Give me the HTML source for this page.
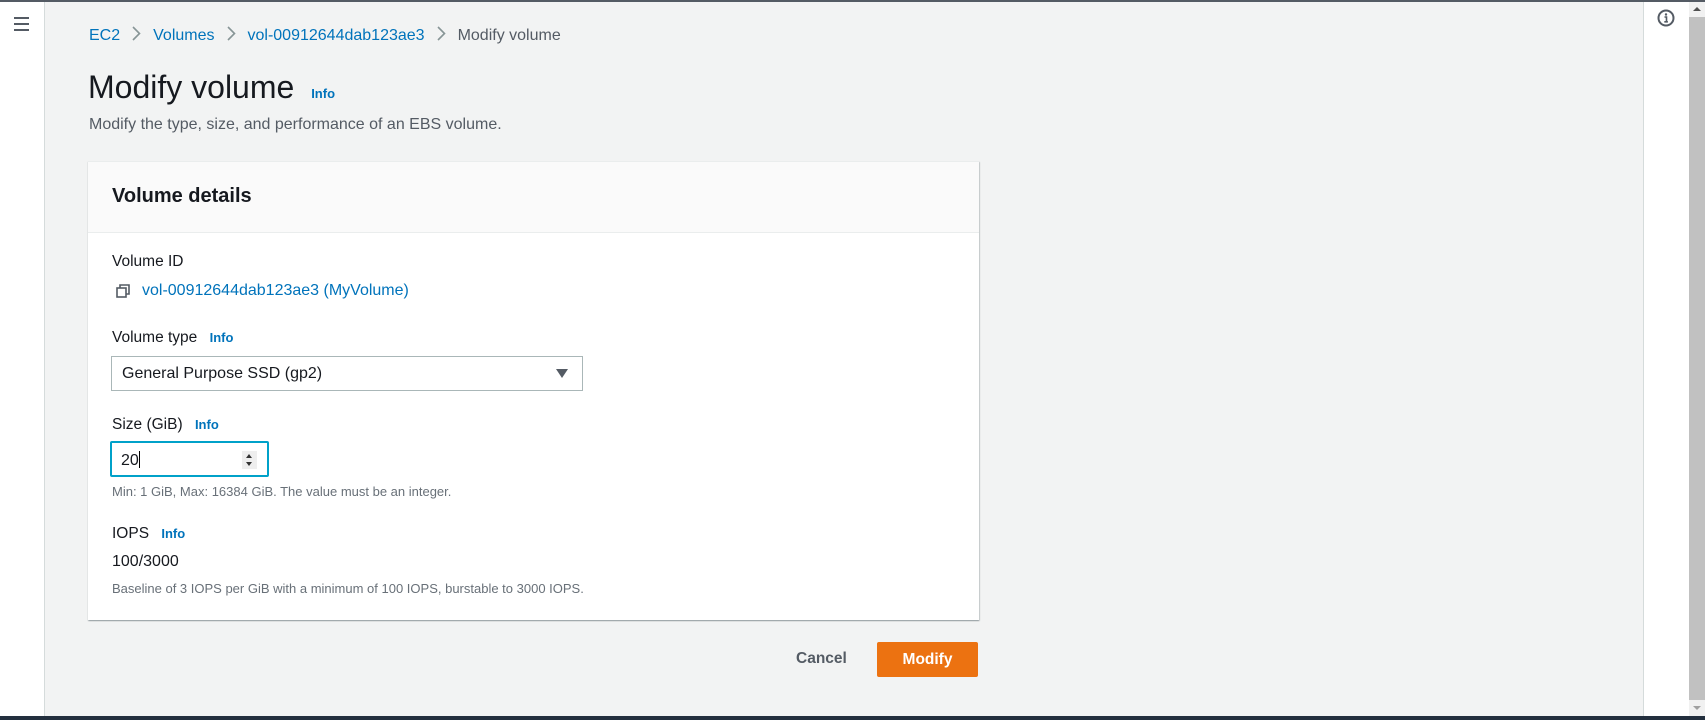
<!DOCTYPE html>
<html><head><meta charset="utf-8"><style>
*{margin:0;padding:0;box-sizing:border-box}
body{width:1705px;height:720px;overflow:hidden;background:#f2f3f3;font-family:"Liberation Sans",sans-serif;color:#16191f;position:relative}
.a{position:absolute;white-space:nowrap}
.lnk{color:#0073bb}
.info{color:#0073bb;font-weight:bold;font-size:13px}
.lbl{font-size:15.5px;color:#16191f}
.help{font-size:13px;color:#687078}
.chev{display:inline-block;margin:0 12px;vertical-align:-1px}
</style></head><body>
<div class="a" style="left:0;top:0;width:1705px;height:2px;background:#545b64"></div>
<div class="a" style="left:0;top:2px;width:45px;height:714px;background:#fff;border-right:1px solid #d5dbdb"></div>
<div class="a" style="left:14px;top:17px;width:15px">
 <div style="height:2px;background:#545b64;margin-bottom:4px"></div>
 <div style="height:2px;background:#545b64;margin-bottom:4px"></div>
 <div style="height:2px;background:#545b64"></div>
</div>
<div class="a" style="left:1643px;top:2px;width:46px;height:714px;background:#fff;border-left:1px solid #d5dbdb"></div>
<svg class="a" style="left:1657px;top:9px" width="18" height="18" viewBox="0 0 18 18"><circle cx="9" cy="9" r="7.5" fill="none" stroke="#545b64" stroke-width="2"/><circle cx="9" cy="5.5" r="1.2" fill="#545b64"/><path d="M7.5 8h2v4.5M7.3 12.8h3.6" stroke="#545b64" stroke-width="1.6" fill="none"/></svg>
<div class="a" style="left:1689px;top:2px;width:16px;height:714px;background:#c1c1c1"></div>
<div class="a" style="left:1689px;top:2px;width:16px;height:15px;background:#f1f1f1"></div>
<div class="a" style="left:1689px;top:700px;width:16px;height:16px;background:#f1f1f1"></div>
<div class="a" style="left:1693px;top:7px;border-left:4px solid transparent;border-right:4px solid transparent;border-bottom:4px solid #505050"></div>
<div class="a" style="left:1693px;top:706px;border-left:4px solid transparent;border-right:4px solid transparent;border-top:4px solid #a0a0a0"></div>
<div class="a" style="left:0;top:716px;width:1705px;height:4px;background:#232f3e"></div>

<div class="a" style="left:89px;top:26px;font-size:16px;color:#545b64">
<span class="lnk">EC2</span><svg class="chev" width="9" height="15" viewBox="0 0 9 15"><path d="M1 1l6.5 6.5L1 14" fill="none" stroke="#879596" stroke-width="1.6"/></svg><span class="lnk">Volumes</span><svg class="chev" width="9" height="15" viewBox="0 0 9 15"><path d="M1 1l6.5 6.5L1 14" fill="none" stroke="#879596" stroke-width="1.6"/></svg><span class="lnk">vol-00912644dab123ae3</span><svg class="chev" width="9" height="15" viewBox="0 0 9 15"><path d="M1 1l6.5 6.5L1 14" fill="none" stroke="#879596" stroke-width="1.6"/></svg>Modify volume</div>
<div class="a" style="left:88px;top:69px;font-size:32px;color:#16191f">Modify volume <span class="info" style="margin-left:8px">Info</span></div>
<div class="a" style="left:89px;top:116px;font-size:16px;color:#545b64">Modify the type, size, and performance of an EBS volume.</div>

<div class="a" style="left:88px;top:161px;width:891px;height:459px;background:#fff;box-shadow:0 1px 1px rgba(0,28,36,.3),1px 1px 1px rgba(0,28,36,.15);border-top:1px solid #eaeded">
 <div style="height:71px;background:#fafafa;border-bottom:1px solid #eaeded;padding:23px 0 0 24px;font-size:20px;font-weight:bold">Volume details</div>
</div>
<div class="a lbl" style="left:112px;top:253px">Volume ID</div>
<svg class="a" style="left:116px;top:284px" width="14" height="14" viewBox="0 0 14 14"><rect x="1" y="4" width="9" height="9" fill="none" stroke="#545b64" stroke-width="1.6"/><path d="M4 4V1h9v9h-3" fill="none" stroke="#545b64" stroke-width="1.6"/></svg>
<div class="a lnk" style="left:142px;top:282px;font-size:16px">vol-00912644dab123ae3 (MyVolume)</div>

<div class="a lbl" style="left:112px;top:329px">Volume type <span class="info" style="margin-left:8px">Info</span></div>
<div class="a" style="left:111px;top:356px;width:472px;height:35px;border:1px solid #aab7b8;background:#fff;font-size:16px;padding:8px 0 0 10px">General Purpose SSD (gp2)</div>
<div class="a" style="left:556px;top:369px;border-left:6px solid transparent;border-right:6px solid transparent;border-top:9px solid #545b64"></div>

<div class="a lbl" style="left:112px;top:416px">Size (GiB) <span class="info" style="margin-left:8px">Info</span></div>
<div class="a" style="left:110px;top:441px;width:159px;height:36px;border:2px solid #00a1c9;border-radius:2px;background:#fff;font-size:16px;padding:8px 0 0 9px">20<span style="display:inline-block;width:1px;height:17px;background:#000;vertical-align:-3px"></span></div>
<div class="a" style="left:242px;top:451px;width:15px;height:18px;background:#eee"></div>
<div class="a" style="left:246px;top:454px;border-left:3.5px solid transparent;border-right:3.5px solid transparent;border-bottom:4px solid #333"></div>
<div class="a" style="left:246px;top:462px;border-left:3.5px solid transparent;border-right:3.5px solid transparent;border-top:4px solid #333"></div>
<div class="a help" style="left:112px;top:484px">Min: 1 GiB, Max: 16384 GiB. The value must be an integer.</div>

<div class="a lbl" style="left:112px;top:525px">IOPS <span class="info" style="margin-left:8px">Info</span></div>
<div class="a" style="left:112px;top:553px;font-size:16px">100/3000</div>
<div class="a help" style="left:112px;top:581px">Baseline of 3 IOPS per GiB with a minimum of 100 IOPS, burstable to 3000 IOPS.</div>

<div class="a" style="left:796px;top:650px;font-size:15.5px;font-weight:bold;color:#545b64">Cancel</div>
<div class="a" style="left:877px;top:642px;width:101px;height:35px;background:#ec7211;border-radius:2px;color:#fff;font-size:15.5px;font-weight:bold;text-align:center;line-height:35px">Modify</div>
</body></html>
